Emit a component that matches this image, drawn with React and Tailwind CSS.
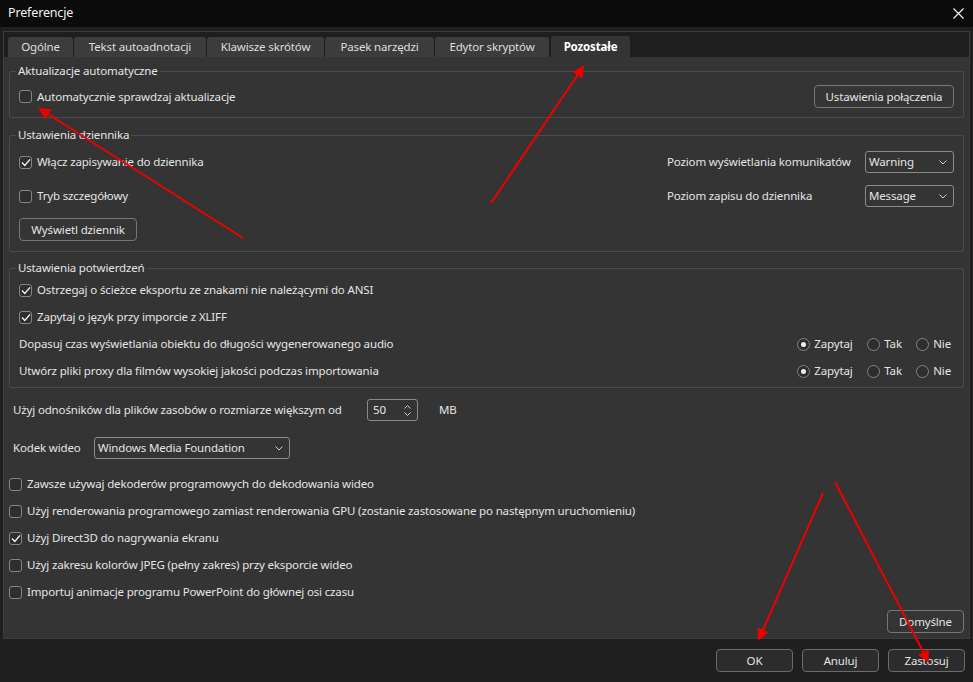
import React from 'react';

function Check({ checked }) {
  return (
    <span className="flex h-[13px] w-[13px] shrink-0 items-center justify-center rounded-[3px] border border-[#858585] bg-[#2e2e2e]">
      {checked && (
        <svg width="10" height="9" viewBox="0 0 10 9" fill="none">
          <path d="M1 4.6 L3.8 7.4 L9 1.4" stroke="#f2f2f2" strokeWidth="1.4" />
        </svg>
      )}
    </span>
  );
}

function CheckRow({ checked, children }) {
  return (
    <div className="flex h-[22px] items-center gap-[5px] whitespace-nowrap">
      <Check checked={checked} />
      <span>{children}</span>
    </div>
  );
}

function Radio({ on, label, w }) {
  return (
    <div className={`flex items-center gap-[4px] ${w}`}>
      <span className="flex h-[13px] w-[13px] items-center justify-center rounded-full border border-[#858585] bg-[#2e2e2e]">
        {on && <span className="h-[5px] w-[5px] rounded-full bg-[#f0f0f0]" />}
      </span>
      <span>{label}</span>
    </div>
  );
}

function Chevron() {
  return (
    <svg width="8" height="5" viewBox="0 0 8 5" fill="none">
      <path d="M0.5 0.5 L4 4 L7.5 0.5" stroke="#cfcfcf" strokeWidth="1" />
    </svg>
  );
}

function Select({ value, w }) {
  return (
    <div className={`flex h-[22px] ${w} items-center justify-between rounded-[3px] border border-[#8a8a8a] pl-[3px] pr-[6px]`}>
      <span>{value}</span>
      <Chevron />
    </div>
  );
}

function Btn({ children, w, dark }) {
  return (
    <div
      className={`flex h-[23px] ${w} items-center justify-center rounded-[4px] border ${
        dark ? 'border-[#6b6b6b] bg-[#2c2c2c]' : 'border-[#777] bg-[#353535]'
      }`}
    >
      {children}
    </div>
  );
}

function Group({ title, h, mt, children }) {
  return (
    <fieldset className={`${h} ${mt} rounded-[2px] border border-[#4a4a4a]`}>
      <legend className="ml-[6px] px-[2px] leading-[16px]">{title}</legend>
      {children}
    </fieldset>
  );
}

const tabs = ['Ogólne', 'Tekst autoadnotacji', 'Klawisze skrótów', 'Pasek narzędzi', 'Edytor skryptów'];
const tabW = ['w-[65px]', 'w-[132px]', 'w-[117px]', 'w-[109px]', 'w-[114px]'];

function ConfirmRow({ children }) {
  return (
    <div className="flex h-[22px] items-center justify-between whitespace-nowrap">
      <span>{children}</span>
      <div className="flex items-center">
        <Radio on label="Zapytaj" w="w-[70px]" />
        <Radio label="Tak" w="w-[49px]" />
        <Radio label="Nie" w="" />
      </div>
    </div>
  );
}

export default function App() {
  return (
    <div className="relative h-[682px] w-[973px] overflow-hidden bg-[#1f1f1f] font-['Noto_Sans',sans-serif] text-[11.5px] tracking-[-0.15px] text-[#e4e4e4]">
      {/* title bar */}
      <div className="flex h-[27px] items-center justify-between bg-[#0b0b0b] pl-[8px] pr-[9px]">
        <span className="text-[12.5px] text-[#f2f2f2]">Preferencje</span>
        <svg width="11" height="11" viewBox="0 0 11 11" fill="none">
          <path d="M0.5 0.5 L10.5 10.5 M10.5 0.5 L0.5 10.5" stroke="#f2f2f2" strokeWidth="1.2" />
        </svg>
      </div>

      <div className="mx-[3px] mt-[4px] flex h-[608px] flex-col border border-[#3d3d3d] bg-[#1e1e1e]">
        {/* tabs */}
        <div className="flex h-[25px] items-end gap-[1px] pl-[4px]">
          {tabs.map((t, i) => (
            <div
              key={t}
              className={`flex h-[20px] ${tabW[i]} items-center justify-center rounded-t-[3px] bg-[#3c3c3c] text-[#dedede]`}
            >
              {t}
            </div>
          ))}
          <div className="ml-[1px] flex h-[21px] w-[79px] items-center justify-center rounded-t-[3px] bg-[#343434] font-bold text-white">
            Pozostałe
          </div>
        </div>

        {/* panel */}
        <div className="flex flex-1 flex-col bg-[#343434] px-[5px]">
          <Group title="Aktualizacje automatyczne" h="h-[55px]" mt="mt-[6px]">
            <div className="flex items-center justify-between pl-[9px] pr-[9px] pt-[6px]">
              <CheckRow checked={false}>Automatycznie sprawdzaj aktualizacje</CheckRow>
              <Btn w="w-[140px]">Ustawienia połączenia</Btn>
            </div>
          </Group>

          <Group title="Ustawienia dziennika" h="h-[125px]" mt="mt-[9px]">
            <div className="flex justify-between pl-[9px] pr-[9px] pt-[8px]">
              <div className="flex flex-col">
                <CheckRow checked>Włącz zapisywanie do dziennika</CheckRow>
                <div className="mt-[12px]">
                  <CheckRow checked={false}>Tryb szczegółowy</CheckRow>
                </div>
                <div className="mt-[11px]">
                  <Btn w="w-[118px]">Wyświetl dziennik</Btn>
                </div>
              </div>
              <div className="grid grid-cols-[198px_89px] grid-rows-[22px_22px] gap-y-[12px] whitespace-nowrap">
                <span className="flex items-center">Poziom wyświetlania komunikatów</span>
                <Select value="Warning" w="w-[89px]" />
                <span className="flex items-center">Poziom zapisu do dziennika</span>
                <Select value="Message" w="w-[89px]" />
              </div>
            </div>
          </Group>

          <Group title="Ustawienia potwierdzeń" h="h-[128px]" mt="mt-[8px]">
            <div className="flex flex-col gap-[5px] pl-[9px] pr-[12px] pt-[3px]">
              <CheckRow checked>Ostrzegaj o ścieżce eksportu ze znakami nie należącymi do ANSI</CheckRow>
              <CheckRow checked>Zapytaj o język przy imporcie z XLIFF</CheckRow>
              <ConfirmRow>Dopasuj czas wyświetlania obiektu do długości wygenerowanego audio</ConfirmRow>
              <ConfirmRow>Utwórz pliki proxy dla filmów wysokiej jakości podczas importowania</ConfirmRow>
            </div>
          </Group>

          <div className="mt-[11px] flex h-[22px] items-center whitespace-nowrap pl-[4px]">
            <span className="w-[354px]">Użyj odnośników dla plików zasobów o rozmiarze większym od</span>
            <div className="flex h-[22px] w-[51px] items-center justify-between rounded-[3px] border border-[#8a8a8a] pl-[5px] pr-[6px]">
              <span>50</span>
              <div className="flex flex-col gap-[3px]">
                <svg width="7" height="4" viewBox="0 0 7 4" fill="none">
                  <path d="M0.5 3.5 L3.5 0.5 L6.5 3.5" stroke="#cfcfcf" strokeWidth="1" />
                </svg>
                <svg width="7" height="4" viewBox="0 0 7 4" fill="none">
                  <path d="M0.5 0.5 L3.5 3.5 L6.5 0.5" stroke="#cfcfcf" strokeWidth="1" />
                </svg>
              </div>
            </div>
            <span className="ml-[21px]">MB</span>
          </div>

          <div className="mt-[16px] flex h-[22px] items-center pl-[4px]">
            <span className="w-[81px]">Kodek wideo</span>
            <Select value="Windows Media Foundation" w="w-[196px]" />
          </div>

          <div className="mt-[14px] flex flex-col gap-[5px]">
            <CheckRow checked={false}>Zawsze używaj dekoderów programowych do dekodowania wideo</CheckRow>
            <CheckRow checked={false}>
              Użyj renderowania programowego zamiast renderowania GPU (zostanie zastosowane po następnym uruchomieniu)
            </CheckRow>
            <CheckRow checked>Użyj Direct3D do nagrywania ekranu</CheckRow>
            <CheckRow checked={false}>Użyj zakresu kolorów JPEG (pełny zakres) przy eksporcie wideo</CheckRow>
            <CheckRow checked={false}>Importuj animacje programu PowerPoint do głównej osi czasu</CheckRow>
          </div>

          <div className="mt-[7px] flex justify-end">
            <Btn w="w-[77px]">Domyślne</Btn>
          </div>
        </div>
      </div>

      {/* bottom buttons */}
      <div className="mt-[10px] flex justify-end gap-[9px] pr-[8px]">
        <Btn w="w-[77px]" dark>OK</Btn>
        <Btn w="w-[77px]" dark>Anuluj</Btn>
        <Btn w="w-[77px]" dark>Zastosuj</Btn>
      </div>

      {/* red annotation arrows */}
      <svg className="pointer-events-none absolute inset-0" width="973" height="682" viewBox="0 0 973 682">
        <defs>
          <marker id="ah" markerWidth="6" markerHeight="6" refX="5" refY="3" orient="auto" markerUnits="strokeWidth">
            <path d="M0 0 L6 3 L0 6 Z" fill="#ee0000" />
          </marker>
        </defs>
        <g stroke="#ee0000" strokeWidth="2" markerEnd="url(#ah)">
          <line x1="243" y1="238" x2="40" y2="109" />
          <line x1="491" y1="203" x2="583" y2="67" />
          <line x1="823" y1="493" x2="759" y2="639" />
          <line x1="835" y1="482" x2="928" y2="661" />
        </g>
      </svg>
    </div>
  );
}
